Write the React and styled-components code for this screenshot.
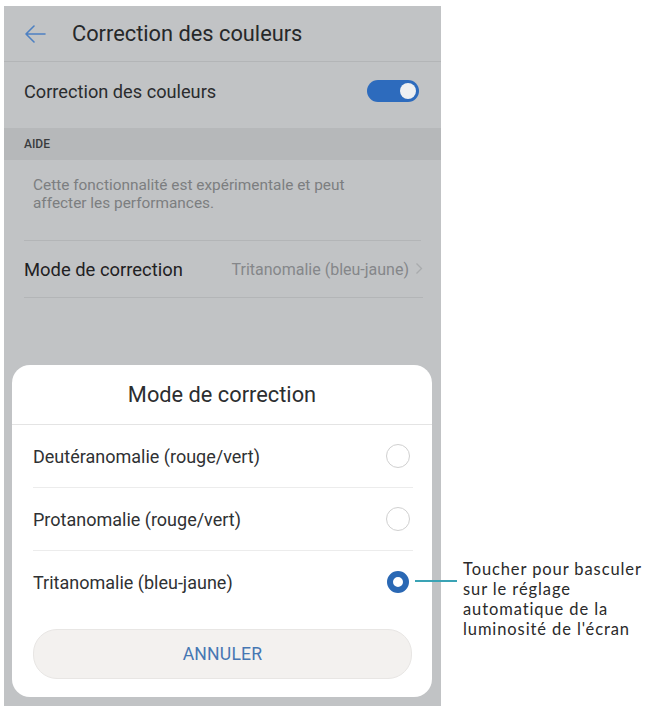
import React from 'react';
import styled, { createGlobalStyle } from 'styled-components';

const Global = createGlobalStyle`
  html, body {
    margin: 0;
    padding: 0;
    background: #ffffff;
  }
  body {
    font-family: Roboto, "Noto Sans", sans-serif;
  }
`;

const Page = styled.div`
  position: relative;
  width: 648px;
  height: 709px;
  display: flex;
  flex-direction: row;
`;

const Phone = styled.div`
  margin: 6px 0 3px 4px;
  width: 437px;
  height: 700px;
  background: #c1c3c5;
  display: flex;
  flex-direction: column;
`;

const Header = styled.div`
  height: 55px;
  display: flex;
  align-items: center;
  padding-left: 20px;
  border-bottom: 1px solid #b3b5b7;
  h1 {
    margin: 0 0 0 26px;
    font-size: 21.8px;
    font-weight: 400;
    color: #26282a;
  }
`;

const SwitchRow = styled.div`
  height: 58px;
  display: flex;
  align-items: center;
  justify-content: space-between;
  padding: 0 22px 0 20px;
  font-size: 18.2px;
  color: #2a2c2e;
`;

const Toggle = styled.div`
  width: 52px;
  height: 22px;
  border-radius: 11px;
  background: #2d6bbd;
  position: relative;
  &::after {
    content: '';
    position: absolute;
    right: 3px;
    top: 3px;
    width: 16px;
    height: 16px;
    border-radius: 50%;
    background: #eef0f2;
  }
`;

const SectionBand = styled.div`
  margin-top: 8px;
  height: 32px;
  display: flex;
  align-items: center;
  padding-left: 20px;
  background: #b6b8ba;
  font-size: 12px;
  font-weight: 500;
  color: #3a3c3e;
`;

const Help = styled.div`
  margin: 0 20px;
  padding: 16px 4px 28px 9px;
  font-size: 15.4px;
  line-height: 18px;
  color: #7c7e80;
  border-bottom: 1px solid #b3b5b7;
`;

const ModeRow = styled.div`
  margin: 0 18px 0 20px;
  height: 56px;
  display: flex;
  align-items: center;
  justify-content: space-between;
  border-bottom: 1px solid #b3b5b7;
  span.label {
    font-size: 18.4px;
    color: #1f2123;
  }
  span.value {
    font-size: 16px;
    color: #85878a;
  }
`;

const Spacer = styled.div`
  flex: 1;
`;

const Dialog = styled.div`
  margin: 0 9px 9px 8px;
  height: 332px;
  background: #ffffff;
  border-radius: 18px;
  display: flex;
  flex-direction: column;
`;

const DialogTitle = styled.div`
  height: 59px;
  display: flex;
  align-items: center;
  justify-content: center;
  font-size: 21.8px;
  color: #2c2e30;
  border-bottom: 1px solid #e4e4e4;
`;

const Option = styled.div`
  margin: 0 19px 0 21px;
  height: 62px;
  display: flex;
  align-items: center;
  justify-content: space-between;
  font-size: 18px;
  color: #2f3133;
  border-bottom: ${p => (p.$last ? 'none' : '1px solid #ececec')};
`;

const Radio = styled.div`
  box-sizing: border-box;
  width: ${p => (p.$on ? '22px' : '24px')};
  height: ${p => (p.$on ? '22px' : '24px')};
  border-radius: 50%;
  border: ${p => (p.$on ? '6.5px solid #2a68b4' : '1.5px solid #d0d0d0')};
  margin-right: ${p => (p.$on ? '4px' : '3px')};
`;

const CancelButton = styled.div`
  margin: 16px 20px 0 21px;
  height: 48px;
  border-radius: 24px;
  background: #f3f1ef;
  border: 1px solid #e8e6e4;
  display: flex;
  align-items: center;
  justify-content: center;
  font-size: 17.6px;
  color: #4677b3;
  letter-spacing: 0.2px;
`;

const Callout = styled.div`
  margin-top: 559px;
  margin-left: 22px;
  font-family: Lato, "Open Sans", sans-serif;
  font-size: 16.5px;
  line-height: 20px;
  letter-spacing: 0.9px;
  color: #2a2a2a;
  white-space: nowrap;
`;

const Leader = styled.div`
  position: absolute;
  left: 415px;
  top: 580px;
  width: 42px;
  height: 1.5px;
  background: #3aa3b5;
`;

const BackArrow = () => (
  <svg width="22" height="18" viewBox="0 0 22 18" fill="none">
    <path d="M21 9H2M10 1L2 9l8 8" stroke="#4d80c2" strokeWidth="1.6" strokeLinecap="round" strokeLinejoin="round" />
  </svg>
);

const Chevron = () => (
  <svg width="8" height="13" viewBox="0 0 8 13" fill="none" style={{ marginLeft: 6 }}>
    <path d="M1.5 1.5l5 5-5 5" stroke="#a9abad" strokeWidth="1.3" />
  </svg>
);

const options = [
  { label: 'Deutéranomalie (rouge/vert)', on: false },
  { label: 'Protanomalie (rouge/vert)', on: false },
  { label: 'Tritanomalie (bleu-jaune)', on: true },
];

export default function App() {
  return (
    <Page>
      <Global />
      <Phone>
        <Header>
          <BackArrow />
          <h1>Correction des couleurs</h1>
        </Header>
        <SwitchRow>
          <span>Correction des couleurs</span>
          <Toggle />
        </SwitchRow>
        <SectionBand>AIDE</SectionBand>
        <Help>
          Cette fonctionnalité est expérimentale et peut
          <br />
          affecter les performances.
        </Help>
        <ModeRow>
          <span className="label">Mode de correction</span>
          <span className="value">
            Tritanomalie (bleu-jaune)
            <Chevron />
          </span>
        </ModeRow>
        <Spacer />
        <Dialog>
          <DialogTitle>Mode de correction</DialogTitle>
          {options.map((o, i) => (
            <Option key={o.label} $last={i === options.length - 1}>
              {o.label}
              <Radio $on={o.on} />
            </Option>
          ))}
          <CancelButton>ANNULER</CancelButton>
        </Dialog>
      </Phone>
      <Callout>
        Toucher pour basculer
        <br />
        sur le réglage
        <br />
        automatique de la
        <br />
        luminosité de l'écran
      </Callout>
      <Leader />
    </Page>
  );
}
